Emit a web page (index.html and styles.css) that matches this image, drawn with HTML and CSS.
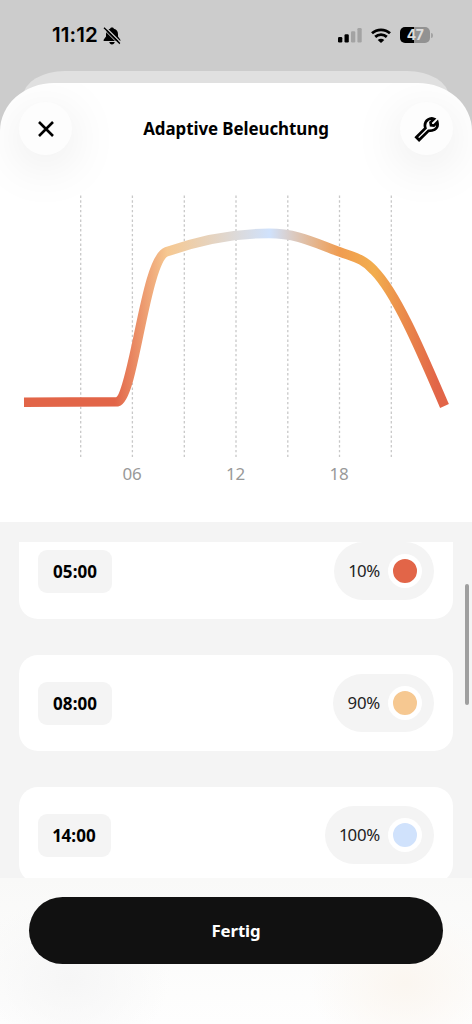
FILE: index.html
```html
<!DOCTYPE html>
<html lang="de">
<head>
<meta charset="utf-8">
<title>Adaptive Beleuchtung</title>
<link rel="stylesheet" href="styles.css">
</head>
<body>
<div class="screen">
  <div class="statusbar">
    <div class="clock">11:12
      <svg class="bell" width="18" height="18" viewBox="0 0 18 18"><path d="M9 .5c-1 0-1.700.6-1.900 1.200C4.200 2.400 3 4.400 3 7.200v2.400L.8 12.400c-.5.900-.2 1.600.6 1.600h15.200c.8 0 1.100-.7.600-1.600L15 9.600V7.200c0-2.800-1.200-4.800-4.100-5.500C10.700 1.100 10 .5 9 .5zM6.300 14.900c.2 1.600 1.300 2.500 2.700 2.500s2.500-.9 2.700-2.500z"/><path d="M2.300 0L17.800 15.500" stroke="#ccc" stroke-width="1.300"/><path d="M1 .8L16.800 16.600" stroke="#000" stroke-width="1.500"/><path d="M0 1.600L15.800 17.400" stroke="#ccc" stroke-width="1"/></svg>
    </div>
    <div class="indicators">
      <svg width="24" height="16" viewBox="0 0 24 16"><rect x="0" y="10" width="4.300" height="5.500" rx="1.200"/><rect x="6.500" y="7.200" width="4.300" height="8.300" rx="1.200"/><g fill="#a3a3a3"><rect x="13" y="4.200" width="4.300" height="11.300" rx="1.200"/><rect x="19.400" y="1" width="4.300" height="14.500" rx="1.200"/></g></svg>
      <svg width="20" height="15" viewBox="0 0 20 15"><path d="M1 5.300C6 .7 14 .7 19 5.300M4.200 8.900c3.300-3 8.300-3 11.600 0" fill="none" stroke="#000" stroke-width="2.800"/><path d="M6.700 12c1.900-1.700 4.700-1.700 6.600 0L10 15z"/></svg>
      <div class="battery"><span>47</span></div>
    </div>
  </div>
  <div class="sheet-behind"></div>
  <main class="sheet">
    <header class="topbar">
      <button class="round" aria-label="Schließen"><svg width="18" height="18" viewBox="0 0 18 18"><path d="M2 2l14 14M16 2L2 16" fill="none" stroke="#000" stroke-width="2.600"/></svg></button>
      <h1>Adaptive Beleuchtung</h1>
      <button class="round" aria-label="Einstellungen"><svg width="26" height="26" viewBox="0 0 26 26"><path d="M2.300 21.200L11.400 12.100C10.400 8.900 11.400 5.500 14 3.700C16 2.300 18.200 2.200 20 2.900L16.500 6.400L17 9.200L19.800 9.600L23.300 6.100C24.100 9.300 23 12.200 20.600 13.600C18.800 14.700 16.500 14.900 14.500 14.900L5.100 24Z" fill="none" stroke="#000" stroke-width="2.700"/></svg></button>
    </header>
    <svg class="chart" width="472" height="350" viewBox="0 172 472 350">
      <defs><linearGradient id="light" gradientUnits="userSpaceOnUse" x1="24" y1="0" x2="445" y2="0"><stop offset="0" stop-color="#e26548"/><stop offset=".216" stop-color="#e26548"/><stop offset=".34" stop-color="#f6c891"/><stop offset=".583" stop-color="#d0e2fc"/><stop offset=".749" stop-color="#f09c50"/><stop offset=".832" stop-color="#f2ad4d"/><stop offset=".98" stop-color="#e26548"/></linearGradient></defs>
      <path class="grid" d="M80.700 195.500V458M132.400 195.500V458M184.300 195.500V458M236 195.500V458M287.800 195.500V458M339.500 195.500V458M391.300 195.500V458"/>
      <path d="M24 402.200L117.500 401.700C134 397 145 259 166.500 251.800C200 240 235 233.400 269 233.400C298 233.400 315 243 340 252C353 257 363 258 374 270.500C398 295 425 361 444.500 406" fill="none" stroke="url(#light)" stroke-width="9.600"/>
      <g class="axis"><text x="132" y="480">06</text><text x="235.500" y="480">12</text><text x="339" y="480">18</text></g>
    </svg>
    <section class="schedule">
      <div class="list">
        <div class="card"><span class="time">05:00</span><span class="level"><span class="lead-one">1</span>0%<i class="dot red"></i></span></div>
        <div class="card"><span class="time">08:00</span><span class="level">90%<i class="dot amber"></i></span></div>
        <div class="card"><span class="time"><span class="lead-one">1</span>4:00</span><span class="level"><span class="lead-one">1</span>00%<i class="dot blue"></i></span></div>
      </div>
      <div class="scrollbar"></div>
    </section>
    <footer class="footer"><button class="done">Fertig</button></footer>
  </main>
</div>
</body>
</html>
```
FILE: styles.css
```css
* { box-sizing: border-box; }
body { margin: 0; background: #ccc; }
button { border: 0; padding: 0; font: inherit; }
.screen {
  position: relative; width: 472px; height: 1024px; overflow: hidden;
  display: flex; flex-direction: column; background: #ccc;
  font-family: "Noto Sans", sans-serif; color: #000;
}
.statusbar {
  height: 71px; flex: none; display: flex; justify-content: space-between;
  padding: 25px 39px 0 52px;
}
.clock { display: flex; gap: 5px; height: 20px; align-items: center; font: 600 20.5px/20px Inter, sans-serif; letter-spacing: .1px; }
.bell { margin-top: 1px; }
.indicators { display: flex; gap: 9px; height: 20px; align-items: center; }
.battery {
  position: relative; width: 30px; height: 16px; border-radius: 5px; margin-right: 3px;
  background: linear-gradient(90deg, #000 47%, #929292 47%);
  color: #ddd; font: 700 14px/16px Inter, sans-serif; letter-spacing: -.5px; text-align: center;
}
.battery::after { content: ""; position: absolute; right: -3px; top: 6px; width: 2px; height: 5px; border-radius: 0 2px 2px 0; background: #a3a3a3; }
.sheet-behind { flex: none; height: 42px; margin: 0 23px -30px; background: #e0e0e0; border-radius: 42px 42px 0 0 / 26px 26px 0 0; }
.sheet {
  flex: 1; display: flex; flex-direction: column; background: #fff;
  border-radius: 54px 54px 0 0 / 48px 48px 0 0; overflow: hidden;
}
.topbar { height: 89px; flex: none; display: flex; align-items: flex-start; justify-content: space-between; padding: 19px 19px 0; }
.topbar h1 { margin: 0; font-size: 16.900px; line-height: 53px; font-weight: 700; letter-spacing: -.06px; }
.round {
  width: 53px; height: 53px; border-radius: 50%; background: #fdfdfd;
  display: flex; align-items: center; justify-content: center;
  box-shadow: 0 10px 52px rgba(0, 0, 0, .1);
}
.chart { flex: none; display: block; }
.grid { fill: none; stroke: #c8c8c8; stroke-width: 1.300; stroke-dasharray: 2.400 2.400; }
.axis { font-size: 17px; letter-spacing: -.2px; fill: #999; text-anchor: middle; }
.schedule { position: relative; height: 356px; flex: none; padding: 20px 19px 0; background: #f4f4f4; }
.list { height: 336px; overflow: hidden; display: flex; flex-direction: column; gap: 36px; }
.card {
  height: 96px; flex: none; display: flex; align-items: center; justify-content: space-between;
  padding: 0 19px; background: #fff; border-radius: 19px;
}
.card:first-child { height: 77px; border-radius: 0 0 19px 19px; align-items: flex-start; }
.card:first-child .time { margin-top: 8px; }
.time { height: 43px; padding: 0 15px; border-radius: 9px; background: #f4f4f4; font-size: 17px; letter-spacing: .1px; font-weight: 700; line-height: 43px; }
.level { height: 58px; display: flex; align-items: center; padding: 0 12px 0 15px; border-radius: 29px; background: #f4f4f4; color: #222; font-size: 16.800px; line-height: 22px; letter-spacing: -.25px; }
.lead-one { margin: 0 -.7px; }
.dot { width: 34px; height: 34px; margin-left: 8px; border: 5px solid #fff; border-radius: 50%; }
.red { background: #e26548; }
.amber { background: #f6c891; }
.blue { background: #d0e2fc; }
.scrollbar { position: absolute; right: 3px; top: 62px; width: 4px; height: 121px; border-radius: 2px; background: #9f9f9f; }
.footer {
  flex: 1; padding: 19px 29px 0;
  background:
    radial-gradient(ellipse 95px 75px at 405px 105px, #fbf6f0, rgba(251, 246, 240, 0)),
    radial-gradient(ellipse 100px 80px at 70px 100px, #f6f6f6, rgba(246, 246, 246, 0)),
    linear-gradient(#f9f9f8, #fefefe);
}
.done { width: 100%; height: 67px; border-radius: 34px; background: #111; color: #fff; font-size: 16.800px; font-weight: 700; letter-spacing: -.1px; }
```
